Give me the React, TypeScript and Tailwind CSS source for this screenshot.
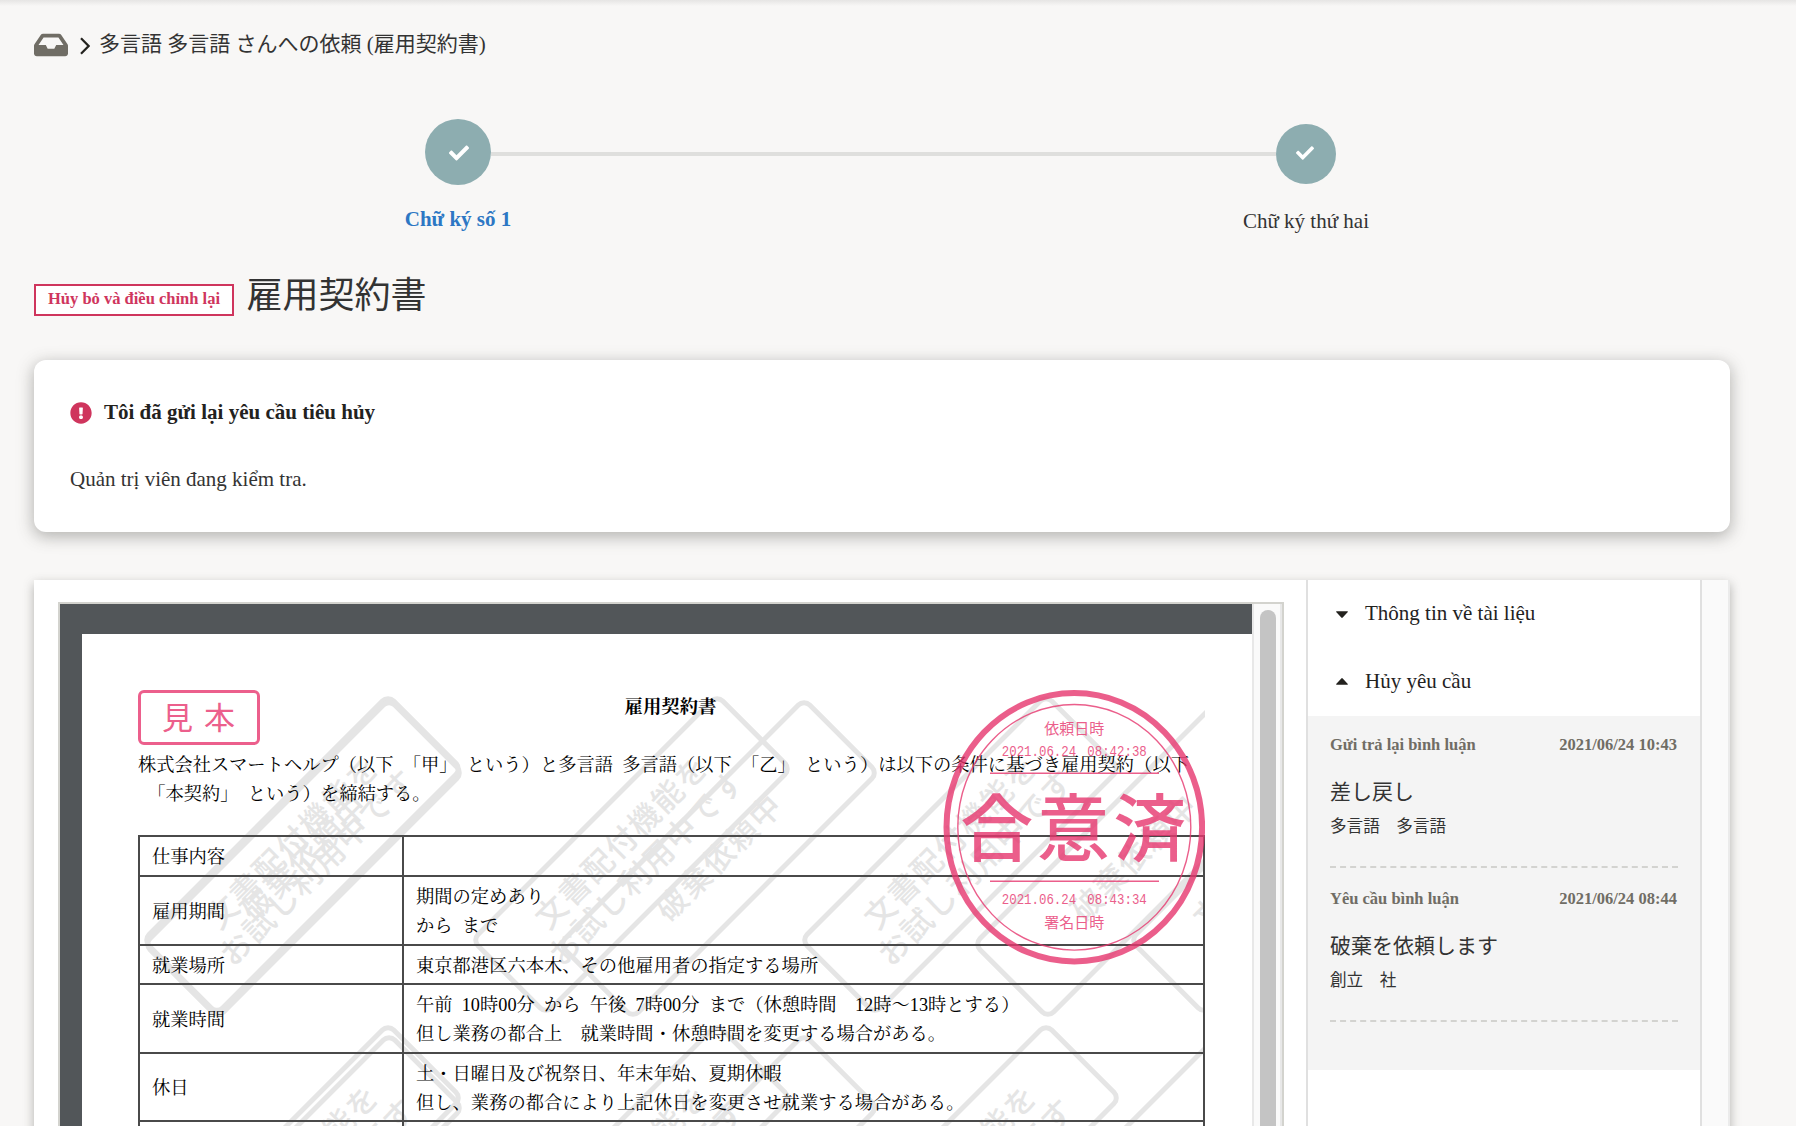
import React from "react";
import { FaCheck, FaExclamationCircle, FaInbox } from "react-icons/fa";

const PINK = "#e7376f";
const UI_FONT = "font-['Liberation_Serif','Noto_Sans_CJK_JP',serif]";
const DOC_FONT = "font-['Liberation_Serif','Noto_Serif_CJK_JP','Noto_Sans_CJK_JP',serif]";
const STAMP_FONT = "'Noto Sans CJK JP', sans-serif";

function Breadcrumb() {
  return (
    <nav className="flex h-[30px] items-center text-[21px] leading-[30px] text-[#333]">
      <FaInbox className="h-[30px] w-[34px] text-[#706d65]" preserveAspectRatio="none" />
      <svg className="ml-[12px] mr-[9px] mt-[2px]" width="10" height="18" viewBox="0 0 10 18" fill="none" stroke="#23221e" strokeWidth="2.2">
        <path d="M1 1.2 8.6 9 1 16.8" />
      </svg>
      <span className="mb-[2px] whitespace-nowrap">多言語 多言語 さんへの依頼 (雇用契約書)</span>
    </nav>
  );
}

function Stepper() {
  return (
    <div className="mt-[59px] flex h-[120px] pl-[358px]">
      <div className="flex w-[132px] flex-col items-center">
        <div className="flex size-[66px] shrink-0 items-center justify-center rounded-full bg-[#8dadb0] pl-[2px] pt-[2px] text-white">
          <FaCheck size={20} />
        </div>
        <div className="mt-[21px] whitespace-nowrap text-[21px] font-bold leading-[26px] text-[#2d77c4]">Chữ ký số 1</div>
      </div>
      <div className="-ml-[33px] mt-[33px] h-1 w-[785px] bg-[#dfdfdd]" />
      <div className="-ml-[40px] mt-[5px] flex w-[140px] flex-col items-center">
        <div className="flex size-[60px] shrink-0 items-center justify-center rounded-full bg-[#8dadb0] pb-[2px] pr-[2px] text-white">
          <FaCheck size={18} />
        </div>
        <div className="mt-[24px] whitespace-nowrap text-[21px] leading-[26px] text-[#333]">Chữ ký thứ hai</div>
      </div>
    </div>
  );
}

function TitleRow() {
  return (
    <div className="mt-[31px] flex h-[52px] items-start">
      <div className="mt-[14px] flex h-8 w-[200px] items-center justify-center whitespace-nowrap border-2 border-[#cf355d] bg-white pb-[2px] text-[16.5px] font-bold leading-5 text-[#cf355d]">
        Hủy bỏ và điều chỉnh lại
      </div>
      <h1 className="ml-[12.5px] mt-px whitespace-nowrap text-[36px] leading-[50px] text-[#333]">雇用契約書</h1>
    </div>
  );
}

function Alert() {
  return (
    <section className="mt-[38px] h-[172px] rounded-[12px] bg-white px-9 pt-[39px] shadow-[0_4px_16px_1px_rgba(70,70,65,0.38)]">
      <div className="flex items-center">
        <FaExclamationCircle size={22} className="mt-[2px] text-[#cf355d]" />
        <h2 className="ml-3 text-[21px] font-bold leading-[26px] text-[#23221e]">Tôi đã gửi lại yêu cầu tiêu hủy</h2>
      </div>
      <p className="mt-[41px] text-[21px] leading-[26px] text-[#333]">Quản trị viên đang kiểm tra.</p>
    </section>
  );
}

const trialTiles = [0, 1, 2, 3].flatMap((c) => [0, 1].map((r) => ({ x: 164.5 + c * 329, y: 164.5 + r * 329 })));
const discardTiles = [0, 1, 2].flatMap((c) => [0, 1].map((r) => ({ x: 165.5 + c * 415, y: 168.5 + r * 335 })));

function Watermark() {
  return (
    <svg className="absolute left-0 top-0" width="1067" height="436" fontFamily={STAMP_FONT} fontSize="31" fontWeight="500" fill="#e5e5e5" letterSpacing="1.8">
      {trialTiles.map((t, i) => (
        <g key={i} transform={`translate(${t.x} ${t.y}) rotate(-45)`}>
          <rect x="-173" y="-52" width="346" height="104" rx="8" fill="none" stroke="#e5e5e5" strokeWidth="5" />
          <text x="2" y="-4.5" textAnchor="middle">文書配付機能を</text>
          <text x="2" y="31" textAnchor="middle">お試し利用中です</text>
        </g>
      ))}
      {discardTiles.map((t, i) => (
        <g key={i} transform={`translate(${t.x} ${t.y}) rotate(-45)`}>
          <rect x="-173" y="-52" width="346" height="104" rx="8" fill="none" stroke="#e5e5e5" strokeWidth="5" />
          <text x="1.5" y="11" textAnchor="middle">破棄依頼中</text>
        </g>
      ))}
    </svg>
  );
}

function AgreedStamp() {
  return (
    <svg className="absolute left-[804px] top-0 opacity-80" width="266" height="276" fill={PINK} fontFamily={STAMP_FONT} textAnchor="middle">
      <ellipse cx="132.3" cy="137.3" rx="127.8" ry="134.2" fill="none" stroke={PINK} strokeWidth="6" />
      <ellipse cx="132.3" cy="137.3" rx="116.5" ry="122.8" fill="none" stroke={PINK} strokeWidth="1.4" />
      <text x="132.3" y="43.5" fontSize="15">依頼日時</text>
      <text x="132.3" y="66" fontSize="15.5" fontFamily="'Liberation Mono', monospace" textLength="145" lengthAdjust="spacingAndGlyphs">2021.06.24 08:42:38</text>
      <rect x="48" y="82.5" width="169" height="1.5" />
      <text x="133" y="165" fontSize="73" fontWeight="500" letterSpacing="3.5">合意済</text>
      <rect x="48" y="190.5" width="169" height="1.5" />
      <text x="132.3" y="213.5" fontSize="15.5" fontFamily="'Liberation Mono', monospace" textLength="145" lengthAdjust="spacingAndGlyphs">2021.06.24 08:43:34</text>
      <text x="132.3" y="237.5" fontSize="15">署名日時</text>
    </svg>
  );
}

const rows = [
  { label: "仕事内容", height: "h-[40px]", lines: [] as string[] },
  { label: "雇用期間", height: "h-[69px]", lines: ["期間の定めあり", "から まで"] },
  { label: "就業場所", height: "h-[39px]", lines: ["東京都港区六本木、その他雇用者の指定する場所"] },
  { label: "就業時間", height: "h-[69px]", lines: ["午前 10時00分 から 午後 7時00分 まで（休憩時間　12時〜13時とする）", "但し業務の都合上　就業時間・休憩時間を変更する場合がある。"] },
  { label: "休日", height: "h-[68px]", lines: ["土・日曜日及び祝祭日、年末年始、夏期休暇", "但し、業務の都合により上記休日を変更させ就業する場合がある。"] },
  { label: "", height: "h-[40px]", lines: [] as string[] },
];

function ContractPage() {
  return (
    <div className="h-[492px] w-[1170px] bg-white pl-14 pt-14">
      <div className={`relative h-[436px] w-[1067px] overflow-hidden whitespace-nowrap text-[18.3px] leading-[29px] text-black [word-spacing:4.6px] ${DOC_FONT}`}>
        <Watermark />
        <div className="relative flex h-[55px] items-start">
          <div className="flex h-[55px] w-[122px] items-center justify-center rounded-[6px] border-[3px] border-[#ec5f8c] pb-[3px] pl-[10px] font-['Noto_Sans_CJK_JP',sans-serif] text-[31px] leading-[48px] tracking-[11px] text-[#ec5f8c] [word-spacing:0]">
            見本
          </div>
          <h3 className="ml-[364.5px] mt-[3px] text-[18.4px] font-bold">雇用契約書</h3>
        </div>
        <div className="relative mt-[6px] whitespace-pre [text-spacing-trim:space-all]">
          <p>株式会社スマートヘルプ（以下 「甲」 という）と多言語 多言語（以下 「乙」 という）は以下の条件に基づき雇用契約（以下</p>
          <p> 「本契約」 という）を締結する。</p>
        </div>
        <div className="relative mt-[26px] border-x-2 border-t-2 border-[#4a4a4a] [text-spacing-trim:space-all]">
          {rows.map((row, i) => (
            <div key={i} className={`flex border-b-2 border-[#4a4a4a] ${row.height}`}>
              <div className="flex w-[264px] items-center border-r-2 border-[#4a4a4a] pl-[12px] pt-[3px]">{row.label}</div>
              <div className="flex flex-col justify-center pl-[12px] pt-[3px]">
                {row.lines.map((line) => (
                  <p key={line}>{line}</p>
                ))}
              </div>
            </div>
          ))}
        </div>
        <AgreedStamp />
      </div>
    </div>
  );
}

function Viewer() {
  return (
    <div className="ml-6 mt-[22px] flex h-[560px] w-[1226px] border-2 border-[#d3d3ce] bg-[#525659]">
      <div className="w-[1192px] pl-[22px] pt-[30px]">
        <ContractPage />
      </div>
      <div className="flex w-[30px] justify-center border-x-2 border-[#e8e8e8] bg-[#fafafa] pt-[6px]">
        <div className="ml-[2px] h-[700px] w-4 rounded-full bg-[#c4c4c4]" />
      </div>
    </div>
  );
}

const comments = [
  { kind: "Gửi trả lại bình luận", date: "2021/06/24 10:43", body: "差し戻し", author: "多言語　多言語" },
  { kind: "Yêu cầu bình luận", date: "2021/06/24 08:44", body: "破棄を依頼します", author: "創立　社" },
];

function Sidebar() {
  return (
    <aside className="w-[396px] shrink-0 border-x-2 border-[#e0e0e0] bg-white">
      <div className="flex h-[68px] items-center pl-[28px] text-[21px] text-[#23221e]">
        <svg width="12" height="8" viewBox="0 0 12 8" fill="currentColor" className="mt-[2px]">
          <path d="M.6.2h10.8q.9.4.2 1.1L6.7 6.6q-.7.7-1.4 0L.4 1.3Q-.3.6.6.2z" />
        </svg>
        <span className="ml-[17px] whitespace-nowrap">Thông tin về tài liệu</span>
      </div>
      <div className="flex h-[68px] items-center pl-[28px] text-[21px] text-[#23221e]">
        <svg width="12" height="8" viewBox="0 0 12 8" fill="currentColor" className="mb-[3px]">
          <path d="M.6 7.8h10.8q.9-.4.2-1.1L6.7 1.4q-.7-.7-1.4 0L.4 6.7q-.7.7.2 1.1z" />
        </svg>
        <span className="ml-[17px] whitespace-nowrap">Hủy yêu cầu</span>
      </div>
      <div className="h-[354px] bg-[#f4f4f4] px-[22px]">
        {comments.map((c) => (
          <div key={c.date} className="relative h-[154px] pt-[21px] first:h-[152px] first:pt-[19px]">
            <div className="flex justify-between whitespace-nowrap pr-px text-[16.5px] font-bold leading-5 text-[#706d65]">
              <span>{c.kind}</span>
              <span>{c.date}</span>
            </div>
            <p className="mt-[21px] text-[21px] leading-[32px] text-[#333]">{c.body}</p>
            <p className="mt-[7px] text-[16.6px] leading-[24px] text-[#333]">{c.author}</p>
            <svg className="absolute bottom-0 left-0" width="348" height="2">
              <line x1="0" y1="1" x2="348" y2="1" stroke="#d3d3d0" strokeWidth="2" strokeDasharray="6 4.06" />
            </svg>
          </div>
        ))}
      </div>
    </aside>
  );
}

export default function App() {
  return (
    <div className={`h-[1126px] w-[1796px] overflow-hidden bg-[#f8f7f6] ${UI_FONT}`}>
      <div className="h-[6px] bg-linear-to-b from-[#e6e5e4] to-[#f8f7f6]" />
      <div className="ml-[34px] w-[1696px] pt-[24px]">
        <Breadcrumb />
        <Stepper />
        <TitleRow />
        <Alert />
        <main className="mt-12 flex h-[600px] bg-white shadow-[0_4px_10px_0_rgba(70,70,65,0.4)]">
          <div className="w-[1272px] shrink-0">
            <Viewer />
          </div>
          <Sidebar />
          <div className="grow border-r-2 border-[#ebebeb] bg-[#fafafa]" />
        </main>
      </div>
    </div>
  );
}
